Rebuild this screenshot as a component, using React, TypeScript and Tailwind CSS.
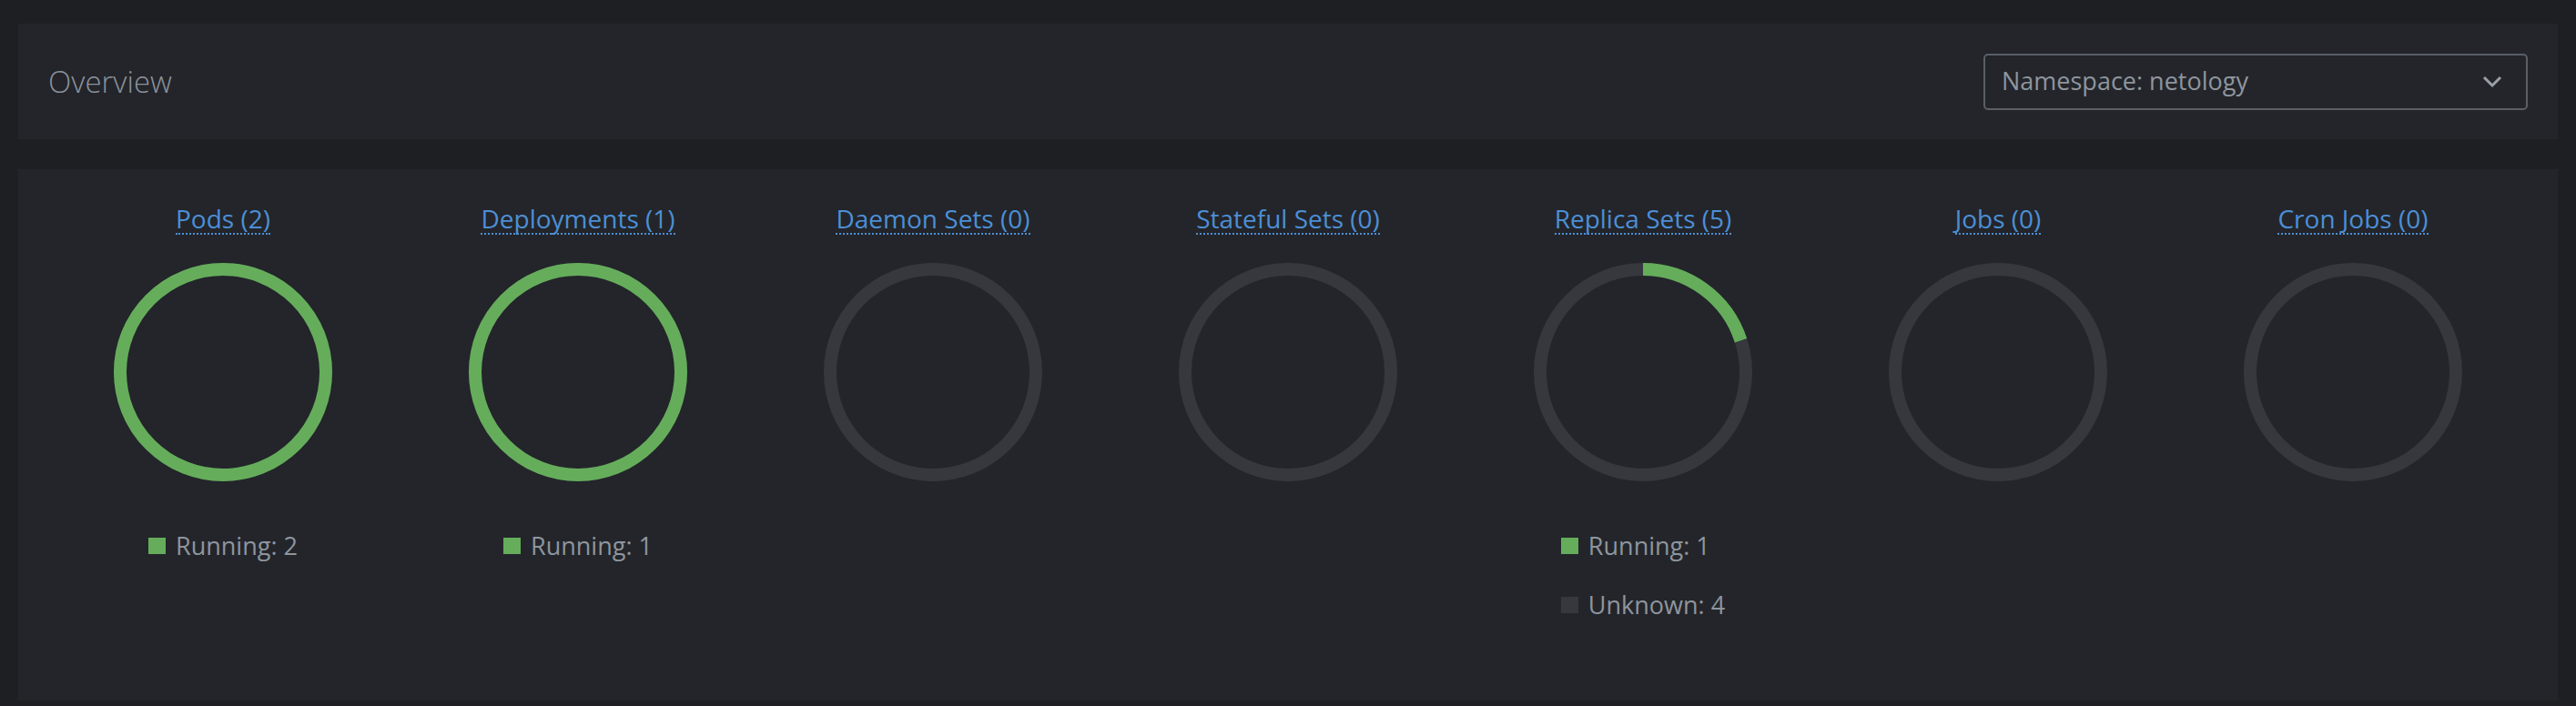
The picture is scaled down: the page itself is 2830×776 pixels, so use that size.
import React from 'react';

type Legend = { label: string; value: number; color: string };
type Workload = { title: string; count: number; running: number; legend: Legend[] };

const GREEN = '#65ad5b';
const RING = '#36383e';

const workloads: Workload[] = [
  { title: 'Pods', count: 2, running: 2, legend: [{ label: 'Running', value: 2, color: GREEN }] },
  { title: 'Deployments', count: 1, running: 1, legend: [{ label: 'Running', value: 1, color: GREEN }] },
  { title: 'Daemon Sets', count: 0, running: 0, legend: [] },
  { title: 'Stateful Sets', count: 0, running: 0, legend: [] },
  {
    title: 'Replica Sets',
    count: 5,
    running: 1,
    legend: [
      { label: 'Running', value: 1, color: GREEN },
      { label: 'Unknown', value: 4, color: RING },
    ],
  },
  { title: 'Jobs', count: 0, running: 0, legend: [] },
  { title: 'Cron Jobs', count: 0, running: 0, legend: [] },
];

const Donut: React.FC<{ running: number; total: number }> = ({ running, total }) => {
  const r = 113;
  const circ = 2 * Math.PI * r;
  const frac = total > 0 ? running / total : 0;
  return (
    <svg width="240" height="240" viewBox="0 0 240 240" className="block">
      <circle cx="120" cy="120" r={r} fill="none" stroke={RING} strokeWidth="14" />
      {frac > 0 && (
        <circle
          cx="120"
          cy="120"
          r={r}
          fill="none"
          stroke={GREEN}
          strokeWidth="14"
          strokeDasharray={`${frac * circ} ${circ}`}
          transform="rotate(-90 120 120)"
        />
      )}
    </svg>
  );
};

const Column: React.FC<{ w: Workload }> = ({ w }) => (
  <div className="flex flex-col items-center">
    <a className="text-[28px] leading-[32px] text-[#4c8fd6] border-b-2 border-dotted border-[#4c8fd6] cursor-pointer">
      {w.title} ({w.count})
    </a>
    <div className="mt-[31px]">
      <Donut running={w.running} total={w.count} />
    </div>
    {w.legend.length > 0 && (
      <ul className="mt-[53px] flex flex-col gap-[29px]">
        {w.legend.map((l) => (
          <li key={l.label} className="flex items-center gap-[11px] h-[36px] text-[27px] text-[#8e959e]">
            <span className="w-[19px] h-[18px]" style={{ background: l.color }} />
            <span>
              {l.label}: {l.value}
            </span>
          </li>
        ))}
      </ul>
    )}
  </div>
);

export default function App() {
  return (
    <div className="min-h-screen bg-[#1e1f23] px-5 pt-[26px] pb-[6px] font-['Open_Sans',sans-serif]">
      <div className="h-[127px] bg-[#23252a] flex items-center justify-between px-[33px]">
        <h1 className="text-[33px] font-light text-[#8b929c]">Overview</h1>
        <div className="w-[598px] h-[62px] border-2 border-[#5a5f66] rounded-[5px] flex items-center justify-between pl-[18px] pr-[26px] cursor-pointer">
          <span className="text-[27px] text-[#8e959e]">Namespace: netology</span>
          <svg width="22" height="14" viewBox="0 0 22 14" fill="none">
            <polyline points="2,2 11,11 20,2" stroke="#9aa0a7" strokeWidth="3" />
          </svg>
        </div>
      </div>
      <div className="mt-[33px] h-[584px] bg-[#23252a] px-[30px] pt-[38px] grid grid-cols-7 items-start">
        {workloads.map((w) => (
          <Column key={w.title} w={w} />
        ))}
      </div>
    </div>
  );
}
